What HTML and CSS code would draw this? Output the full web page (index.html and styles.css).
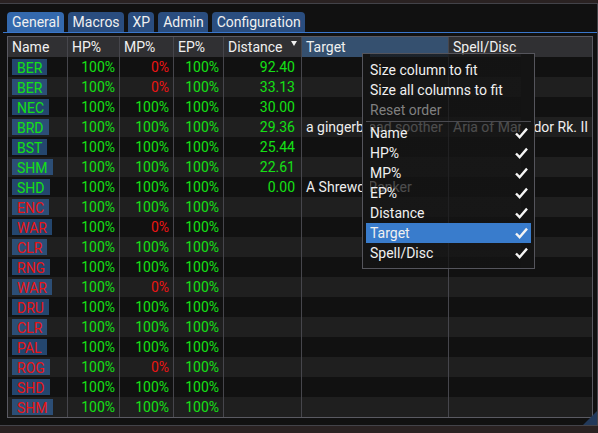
FILE: index.html
```html
<!DOCTYPE html>
<html>
<head>
<meta charset="utf-8">
<link rel="stylesheet" href="styles.css">
</head>
<body>
<div class="window">
  <div class="tabbar">
    <div class="tab active">General</div>
    <div class="tab">Macros</div>
    <div class="tab">XP</div>
    <div class="tab">Admin</div>
    <div class="tab">Configuration</div>
  </div>
  <div class="table">
    <div class="row head">
      <div class="c">Name</div>
      <div class="c">HP%</div>
      <div class="c">MP%</div>
      <div class="c">EP%</div>
      <div class="c sorted"><span>Distance</span><span class="arrow"></span></div>
      <div class="c hover">Target</div>
      <div class="c">Spell/Disc</div>
    </div>
    <div class="row"><div class="c"><span class="btn g">BER</span></div><div class="c n g">100%</div><div class="c n r">0%</div><div class="c n g">100%</div><div class="c n d g">92.40</div><div class="c"></div><div class="c"></div></div>
    <div class="row"><div class="c"><span class="btn g">BER</span></div><div class="c n g">100%</div><div class="c n r">0%</div><div class="c n g">100%</div><div class="c n d g">33.13</div><div class="c"></div><div class="c"></div></div>
    <div class="row"><div class="c"><span class="btn g">NEC</span></div><div class="c n g">100%</div><div class="c n g">100%</div><div class="c n g">100%</div><div class="c n d g">30.00</div><div class="c"></div><div class="c"></div></div>
    <div class="row"><div class="c"><span class="btn g">BRD</span></div><div class="c n g">100%</div><div class="c n g">100%</div><div class="c n g">100%</div><div class="c n d g">29.36</div><div class="c">a gingerbread soother</div><div class="c">Aria of Margidor Rk. II</div></div>
    <div class="row"><div class="c"><span class="btn g">BST</span></div><div class="c n g">100%</div><div class="c n g">100%</div><div class="c n g">100%</div><div class="c n d g">25.44</div><div class="c"></div><div class="c"></div></div>
    <div class="row"><div class="c"><span class="btn g">SHM</span></div><div class="c n g">100%</div><div class="c n g">100%</div><div class="c n g">100%</div><div class="c n d g">22.61</div><div class="c"></div><div class="c"></div></div>
    <div class="row"><div class="c"><span class="btn g">SHD</span></div><div class="c n g">100%</div><div class="c n g">100%</div><div class="c n g">100%</div><div class="c n d g">0.00</div><div class="c">A Shrewd Ranker</div><div class="c"></div></div>
    <div class="row"><div class="c"><span class="btn r">ENC</span></div><div class="c n g">100%</div><div class="c n g">100%</div><div class="c n g">100%</div><div class="c n d"></div><div class="c"></div><div class="c"></div></div>
    <div class="row"><div class="c"><span class="btn r">WAR</span></div><div class="c n g">100%</div><div class="c n r">0%</div><div class="c n g">100%</div><div class="c n d"></div><div class="c"></div><div class="c"></div></div>
    <div class="row"><div class="c"><span class="btn r">CLR</span></div><div class="c n g">100%</div><div class="c n g">100%</div><div class="c n g">100%</div><div class="c n d"></div><div class="c"></div><div class="c"></div></div>
    <div class="row"><div class="c"><span class="btn r">RNG</span></div><div class="c n g">100%</div><div class="c n g">100%</div><div class="c n g">100%</div><div class="c n d"></div><div class="c"></div><div class="c"></div></div>
    <div class="row"><div class="c"><span class="btn r">WAR</span></div><div class="c n g">100%</div><div class="c n r">0%</div><div class="c n g">100%</div><div class="c n d"></div><div class="c"></div><div class="c"></div></div>
    <div class="row"><div class="c"><span class="btn r">DRU</span></div><div class="c n g">100%</div><div class="c n g">100%</div><div class="c n g">100%</div><div class="c n d"></div><div class="c"></div><div class="c"></div></div>
    <div class="row"><div class="c"><span class="btn r">CLR</span></div><div class="c n g">100%</div><div class="c n g">100%</div><div class="c n g">100%</div><div class="c n d"></div><div class="c"></div><div class="c"></div></div>
    <div class="row"><div class="c"><span class="btn r">PAL</span></div><div class="c n g">100%</div><div class="c n g">100%</div><div class="c n g">100%</div><div class="c n d"></div><div class="c"></div><div class="c"></div></div>
    <div class="row"><div class="c"><span class="btn r">ROG</span></div><div class="c n g">100%</div><div class="c n r">0%</div><div class="c n g">100%</div><div class="c n d"></div><div class="c"></div><div class="c"></div></div>
    <div class="row"><div class="c"><span class="btn r">SHD</span></div><div class="c n g">100%</div><div class="c n g">100%</div><div class="c n g">100%</div><div class="c n d"></div><div class="c"></div><div class="c"></div></div>
    <div class="row"><div class="c"><span class="btn r">SHM</span></div><div class="c n g">100%</div><div class="c n g">100%</div><div class="c n g">100%</div><div class="c n d"></div><div class="c"></div><div class="c"></div></div>
  </div>

  <div class="popup">
    <div class="item">Size column to fit</div>
    <div class="item">Size all columns to fit</div>
    <div class="item disabled">Reset order</div>
    <div class="sep"></div>
    <div class="item">Name<svg class="check" viewBox="0 0 13 12"><path d="M1 6.5 L4.6 10.2 L12 1.6"/></svg></div>
    <div class="item">HP%<svg class="check" viewBox="0 0 13 12"><path d="M1 6.5 L4.6 10.2 L12 1.6"/></svg></div>
    <div class="item">MP%<svg class="check" viewBox="0 0 13 12"><path d="M1 6.5 L4.6 10.2 L12 1.6"/></svg></div>
    <div class="item">EP%<svg class="check" viewBox="0 0 13 12"><path d="M1 6.5 L4.6 10.2 L12 1.6"/></svg></div>
    <div class="item">Distance<svg class="check" viewBox="0 0 13 12"><path d="M1 6.5 L4.6 10.2 L12 1.6"/></svg></div>
    <div class="item hl">Target<svg class="check" viewBox="0 0 13 12"><path d="M1 6.5 L4.6 10.2 L12 1.6"/></svg></div>
    <div class="item">Spell/Disc<svg class="check" viewBox="0 0 13 12"><path d="M1 6.5 L4.6 10.2 L12 1.6"/></svg></div>
  </div>
  <div class="grip"></div>
</div>
</body>
</html>
```
FILE: styles.css
```css
html, body {
  margin: 0;
  padding: 0;
  width: 598px;
  height: 433px;
  overflow: hidden;
  background: #2a2222;
  font-family: Roboto, "Liberation Sans", sans-serif;
  font-size: 14px;
  color: #eeeeee;
}

.window {
  position: relative;
  box-sizing: border-box;
  margin: 3px 0 0 -1px;
  width: 599px;
  height: 423px;
  border: 1px solid #434349;
  background: #111111;
}

.tabbar {
  display: flex;
  gap: 4px;
  margin: 8px 0 0 3px;
  padding-left: 4px;
  border-bottom: 1px solid #3a77cc;
}

.tab {
  height: 20px;
  line-height: 20px;
  padding: 0 4px 0 5px;
  background: #2a4d7f;
  border-radius: 4px 4px 0 0;
  color: #f0f0f0;
}

.tab.active {
  background: #3469ad;
}

.table {
  margin: 3px 0 0 7px;
  width: 586px;
  box-sizing: border-box;
  border: 1px solid #5a5a62;
}

.row {
  display: grid;
  grid-template-columns: 60px 52px 54px 50px 78px 147px 143px;
  height: 20px;
  background: #111111;
}

.row:nth-child(odd) {
  background: #1f1f1f;
}

.row.head {
  background: #303033;
}

.c {
  box-sizing: border-box;
  border-right: 1px solid #46464c;
  padding: 1px 4px 0 4px;
  line-height: 19px;
  white-space: nowrap;
  overflow: hidden;
}

.c:last-child {
  border-right: none;
}

.head .c {
  padding-top: 0;
  line-height: 20px;
  color: #f0f0f0;
}

.head .hover {
  background: #35506f;
}

.sorted {
  display: flex;
  justify-content: space-between;
}

.arrow {
  width: 0;
  height: 0;
  margin-top: 4px;
  border-left: 3.5px solid transparent;
  border-right: 3.5px solid transparent;
  border-top: 5px solid #f0f0f0;
}

.n {
  text-align: right;
}

.d {
  padding-right: 6px;
}

.g {
  color: #16e016;
}

.r {
  color: #ec1414;
}

.btn {
  display: inline-block;
  vertical-align: top;
  height: 16px;
  margin-top: 1px;
  padding: 0 5px 0 5px;
  line-height: 18px;
  background: rgba(66, 150, 250, 0.4);
}

.popup {
  position: absolute;
  left: 362px;
  top: 49px;
  width: 173px;
  height: 216px;
  box-sizing: border-box;
  border: 1px solid #55555c;
  background: linear-gradient(to right,
    #141414 0 7px,
    rgba(20, 20, 20, 0.74) 7px calc(100% - 13px),
    #141414 calc(100% - 13px) 100%);
  padding: 6px 3px 5px 3px;
}

.item {
  display: flex;
  justify-content: space-between;
  align-items: flex-start;
  height: 20px;
  line-height: 20px;
  padding: 0 3px 0 4px;
  color: #f0f0f0;
}

.item.disabled {
  color: #808080;
}

.item.hl {
  background: #397ccc;
}

.sep {
  height: 1px;
  margin: 1px 0;
  background: #4a4a50;
}

.check {
  width: 13px;
  height: 12px;
  margin-top: 4px;
  fill: none;
  stroke: #f4f4f4;
  stroke-width: 2.4;
  stroke-linecap: butt;
  stroke-linejoin: miter;
}

.grip {
  position: absolute;
  right: 0;
  bottom: 0;
  width: 14px;
  height: 14px;
  background: #22395a;
  clip-path: polygon(100% 0, 100% 100%, 0 100%);
}
```
